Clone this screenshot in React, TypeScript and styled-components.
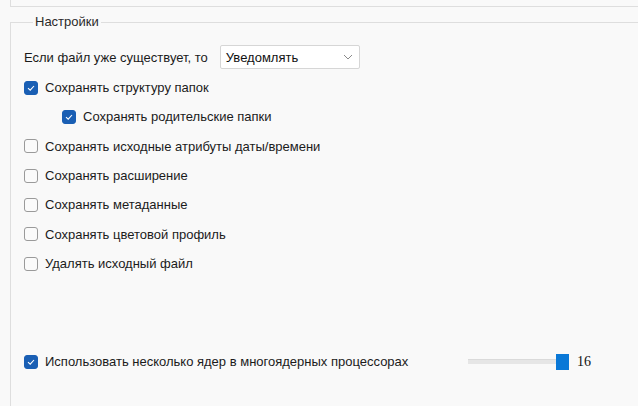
import React from "react";
import styled, { createGlobalStyle } from "styled-components";

const GlobalStyle = createGlobalStyle`
  html, body {
    margin: 0;
    padding: 0;
    background: #f9f9f9;
  }
  body {
    font-family: "Liberation Sans", Arial, sans-serif;
    font-size: 13px;
    color: #1b1b1b;
  }
`;

const Page = styled.div`
  width: 638px;
  height: 406px;
  overflow: hidden;
  padding-left: 10px;
  box-sizing: border-box;
`;

const TopGroup = styled.div`
  height: 6px;
  border-left: 1px solid #dedede;
  border-bottom: 1px solid #dedede;
`;

const Group = styled.fieldset`
  margin: 7px 0 0 0;
  padding: 15px 0 0 13px;
  border: none;
  border-top: 1px solid #dedede;
  border-left: 1px solid #dedede;
  min-height: 400px;
`;

const Legend = styled.legend`
  margin-left: 9px;
  padding: 0 2px;
  line-height: 16px;
  color: #2a2a2a;
`;

const SelectRow = styled.div`
  display: flex;
  align-items: center;
  gap: 12px;
  height: 24px;
  margin-bottom: 4px;
`;

const Select = styled.div`
  box-sizing: border-box;
  width: 140px;
  height: 24px;
  display: flex;
  align-items: center;
  justify-content: space-between;
  padding: 0 6px 0 5px;
  background: #ffffff;
  border: 1px solid #d6d6d6;
  border-radius: 2px;
  color: #111;
`;

const Row = styled.label<{ $indent?: boolean }>`
  display: flex;
  align-items: center;
  gap: 7px;
  height: 29.33px;
  padding-left: ${({ $indent }) => ($indent ? "38px" : "0")};
`;

const Box = styled.span<{ $checked?: boolean }>`
  box-sizing: border-box;
  width: 14px;
  height: 14px;
  border-radius: 3px;
  display: flex;
  align-items: center;
  justify-content: center;
  background: ${({ $checked }) => ($checked ? "#1a5fb4" : "#fbfbfb")};
  border: 1px solid ${({ $checked }) => ($checked ? "#1a5fb4" : "#9a9a9a")};
`;

const Spacer = styled.div`
  height: 68.67px;
`;

const BottomRow = styled.div`
  display: flex;
  align-items: center;
  height: 29.33px;
`;

const BottomLabel = styled(Row)`
  width: 444px;
`;

const Slider = styled.div`
  display: flex;
  align-items: center;
  width: 101px;
  height: 16px;
`;

const Track = styled.div`
  flex: 1;
  height: 4px;
  background: #e6e6e6;
  border-top: 1px solid #dadada;
`;

const Thumb = styled.div`
  width: 13px;
  height: 16px;
  background: #0a78d7;
`;

const Value = styled.span`
  margin-left: 8px;
  font-family: "Liberation Serif", "Times New Roman", serif;
  font-size: 14px;
  color: #111;
`;

const Check = () => (
  <svg width="10" height="10" viewBox="0 0 10 10">
    <path d="M2 5.2 L4.2 7.2 L8 3" fill="none" stroke="#fff" strokeWidth="1.1" />
  </svg>
);

const Chevron = () => (
  <svg width="10" height="6" viewBox="0 0 10 6">
    <path d="M1 1 L5 5 L9 1" fill="none" stroke="#8a8a8a" strokeWidth="1" />
  </svg>
);

type Opt = { label: string; checked?: boolean; indent?: boolean };

const options: Opt[] = [
  { label: "Сохранять структуру папок", checked: true },
  { label: "Сохранять родительские папки", checked: true, indent: true },
  { label: "Сохранять исходные атрибуты даты/времени" },
  { label: "Сохранять расширение" },
  { label: "Сохранять метаданные" },
  { label: "Сохранять цветовой профиль" },
  { label: "Удалять исходный файл" },
];

export default function App() {
  return (
    <Page>
      <GlobalStyle />
      <TopGroup />
      <Group>
        <Legend>Настройки</Legend>
        <SelectRow>
          <span>Если файл уже существует, то</span>
          <Select>
            <span>Уведомлять</span>
            <Chevron />
          </Select>
        </SelectRow>
        {options.map((o) => (
          <Row key={o.label} $indent={o.indent}>
            <Box $checked={o.checked}>{o.checked && <Check />}</Box>
            <span>{o.label}</span>
          </Row>
        ))}
        <Spacer />
        <BottomRow>
          <BottomLabel>
            <Box $checked>
              <Check />
            </Box>
            <span>Использовать несколько ядер в многоядерных процессорах</span>
          </BottomLabel>
          <Slider>
            <Track />
            <Thumb />
          </Slider>
          <Value>16</Value>
        </BottomRow>
      </Group>
    </Page>
  );
}
